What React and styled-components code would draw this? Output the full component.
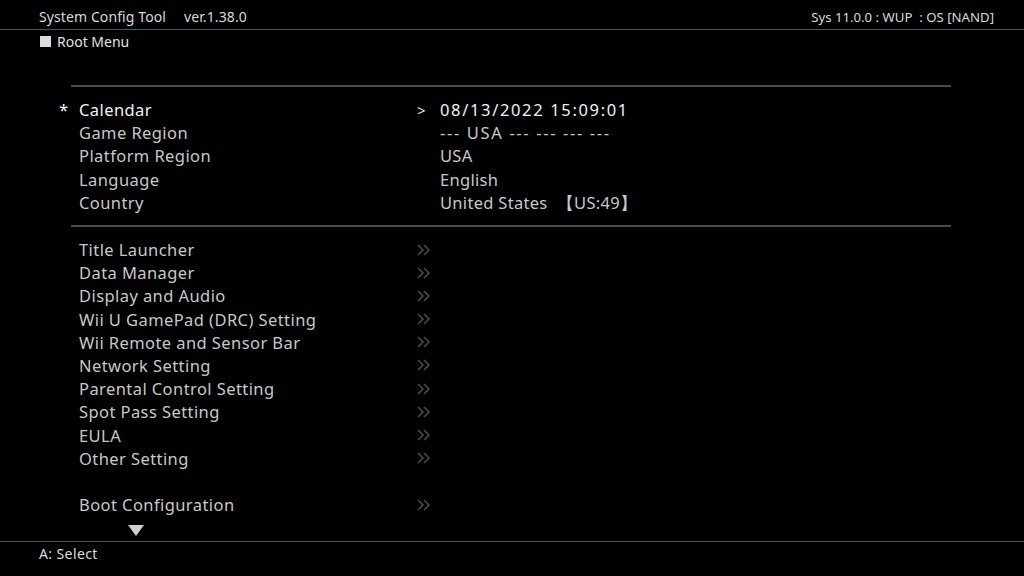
import React from "react";
import styled, { createGlobalStyle } from "styled-components";

const Global = createGlobalStyle`
  html, body { margin: 0; padding: 0; background: #000; }
  body { font-family: "Noto Sans", "Open Sans", sans-serif; }
`;

const Screen = styled.div`
  width: 1024px;
  height: 576px;
  background: #000;
  color: #c9c9c9;
  display: flex;
  flex-direction: column;
  overflow: hidden;
`;

const Header = styled.div`
  height: 30px;
  box-sizing: border-box;
  border-bottom: 1px solid #3f5b63;
  display: flex;
  align-items: center;
  justify-content: space-between;
  padding: 4px 30px 0 39px;
  font-size: 14px;
  letter-spacing: 0.1px;
  color: #d9d9d9;
`;

const Title = styled.div`
  display: flex;
  gap: 18px;
`;

const SysInfo = styled.span`
  font-size: 13.2px;
  letter-spacing: 0;
`;

const Breadcrumb = styled.div`
  height: 22px;
  display: flex;
  align-items: center;
  gap: 6px;
  padding-left: 40px;
  font-size: 14px;
  color: #e2e2e2;
`;

const Square = styled.span`
  width: 11px;
  height: 11px;
  background: #dcdcdc;
`;

const Content = styled.div`
  flex: 1;
  padding: 33px 0 0 50px;
  display: flex;
  flex-direction: column;
`;

const Divider = styled.div`
  margin-left: 21px;
  width: 880px;
  height: 2px;
  background: #4a4a4a;
`;

const Section = styled.div`
  padding: ${(p) => p.$pad || "11px 0"};
  display: flex;
  flex-direction: column;
`;

const Row = styled.div`
  display: grid;
  grid-template-columns: 29px 338px 23px 1fr;
  align-items: center;
  height: 23.2px;
  font-size: 16.5px;
  letter-spacing: 0.42px;
  color: ${(p) => (p.$active ? "#f2f2f2" : "#c8c8c8")};
`;

const Marker = styled.span`
  padding-left: 9px;
  font-size: 17px;
  color: #f0f0f0;
`;

const Cursor = styled.span`
  color: #e8e8e8;
  font-size: 15px;
`;

const Value = styled.span`
  white-space: pre;
  letter-spacing: ${(p) => (p.$wide ? "1.65px" : "0.3px")};
`;

const Spacer = styled.div`
  height: 23.2px;
`;

const MoreArrow = styled.div`
  margin: 6px 0 0 78px;
  height: 16px;
  display: flex;
  align-items: center;
`;

const Footer = styled.div`
  height: 35px;
  box-sizing: border-box;
  border-top: 1px solid #3f5b63;
  display: flex;
  align-items: center;
  padding: 0 0 11px 39px;
  font-size: 14px;
  letter-spacing: 0.4px;
  color: #dcdcdc;
`;

const DoubleChevron = () => (
  <svg width="14" height="12" viewBox="0 0 14 12">
    <path d="M1 1 L6 6 L1 11 M7 1 L12 6 L7 11" fill="none" stroke="#4a4a4a" strokeWidth="1.6" />
  </svg>
);

const info = [
  { label: "Calendar", value: "08/13/2022 15:09:01", active: true, wide: true },
  { label: "Game Region", value: "--- USA --- --- --- ---", wide: true },
  { label: "Platform Region", value: "USA" },
  { label: "Language", value: "English" },
  { label: "Country", value: "United States  \u3010US:49\u3011" },
];

const menu = [
  "Title Launcher",
  "Data Manager",
  "Display and Audio",
  "Wii U GamePad (DRC) Setting",
  "Wii Remote and Sensor Bar",
  "Network Setting",
  "Parental Control Setting",
  "Spot Pass Setting",
  "EULA",
  "Other Setting",
];

export default function App() {
  return (
    <Screen>
      <Global />
      <Header>
        <Title>
          <span>System Config Tool</span>
          <span>ver.1.38.0</span>
        </Title>
        <SysInfo>Sys 11.0.0 : WUP &nbsp;: OS [NAND]</SysInfo>
      </Header>
      <Breadcrumb>
        <Square />
        <span>Root Menu</span>
      </Breadcrumb>
      <Content>
        <Divider />
        <Section>
          {info.map((it) => (
            <Row key={it.label} $active={it.active}>
              <Marker>{it.active ? "*" : ""}</Marker>
              <span>{it.label}</span>
              <Cursor>{it.active ? ">" : ""}</Cursor>
              <Value $wide={it.wide}>{it.value}</Value>
            </Row>
          ))}
        </Section>
        <Divider />
        <Section $pad="11px 0 0">
          {menu.map((m) => (
            <Row key={m}>
              <span />
              <span>{m}</span>
              <DoubleChevron />
              <span />
            </Row>
          ))}
          <Spacer />
          <Row>
            <span />
            <span>Boot Configuration</span>
            <DoubleChevron />
            <span />
          </Row>
        </Section>
        <MoreArrow>
          <svg width="16" height="11" viewBox="0 0 16 11">
            <path d="M0 0 H16 L8 11 Z" fill="#d0d0d0" />
          </svg>
        </MoreArrow>
      </Content>
      <Footer>A: Select</Footer>
    </Screen>
  );
}
